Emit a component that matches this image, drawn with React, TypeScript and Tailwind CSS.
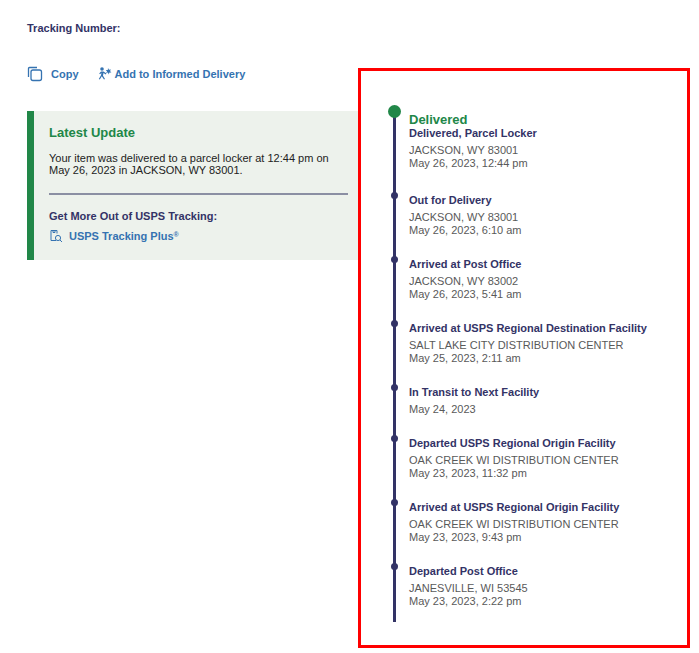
import React from "react";

const items = [
  { t: "Out for Delivery", l: ["JACKSON, WY 83001", "May 26, 2023, 6:10 am"] },
  { t: "Arrived at Post Office", l: ["JACKSON, WY 83002", "May 26, 2023, 5:41 am"] },
  { t: "Arrived at USPS Regional Destination Facility", l: ["SALT LAKE CITY DISTRIBUTION CENTER", "May 25, 2023, 2:11 am"] },
  { t: "In Transit to Next Facility", l: ["May 24, 2023"] },
  { t: "Departed USPS Regional Origin Facility", l: ["OAK CREEK WI DISTRIBUTION CENTER", "May 23, 2023, 11:32 pm"] },
  { t: "Arrived at USPS Regional Origin Facility", l: ["OAK CREEK WI DISTRIBUTION CENTER", "May 23, 2023, 9:43 pm"] },
  { t: "Departed Post Office", l: ["JANESVILLE, WI 53545", "May 23, 2023, 2:22 pm"] },
];

export default function App() {
  return (
    <div className="w-[699px] h-[653px] bg-white flex font-[Liberation_Sans] text-[11px]">
      <div className="w-[331px] ml-[27px] pt-[22px] flex flex-col">
        <div className="font-bold text-[#333366] leading-[13px]">Tracking Number:</div>
        <div className="flex items-center mt-[31px] text-[#3573b1] font-bold h-[16px]">
          <svg width="16" height="16" viewBox="0 0 16 16" fill="none" stroke="#3573b1" strokeWidth="1.3">
            <path d="M1.5 11V2.5a1 1 0 0 1 1-1H10" />
            <rect x="4" y="4" width="10.5" height="10.5" rx="2" />
          </svg>
          <span className="ml-[8px]">Copy</span>
          <svg className="ml-[18px]" width="16" height="16" viewBox="0 0 16 16" fill="#3573b1">
            <circle cx="5" cy="3" r="1.8" />
            <path d="M4 5.5h2.5l3 2-.7 1-2.3-1.4-.5 2.6 2 3.2-1 .6-2.2-3.2-2 3.2-1-.6 2.2-3.6.4-2.3-1.4 1.2-.8-.8z" />
            <path d="M11 2l1 1.8 2-.4-1 1.6 1.4 1.4-2 .1-.6 1.9-.9-1.8-2 .4 1.2-1.6-1.3-1.4 2 .1z" />
          </svg>
          <span className="ml-[2px]">Add to Informed Delivery</span>
        </div>
        <div className="mt-[29px] h-[149px] bg-[#edf2ec] border-l-[7px] border-[#218748] pl-[15px] pr-[10px] pt-[14px]">
          <div className="text-[13px] font-bold text-[#218748] leading-[15px]">Latest Update</div>
          <div className="mt-[12px] text-[#222] leading-[12px]">
            Your item was delivered to a parcel locker at 12:44 pm on May 26, 2023 in JACKSON, WY 83001.
          </div>
          <div className="mt-[17px] border-t-2 border-[#8b8fa3]" />
          <div className="mt-[15px] font-bold text-[#333366] leading-[13px]">Get More Out of USPS Tracking:</div>
          <div className="mt-[5px] flex items-center text-[#3573b1] font-bold">
            <svg width="14" height="14" viewBox="0 0 14 14" fill="none" stroke="#3573b1" strokeWidth="1">
              <path d="M2 1.5h6v3M2 1.5v10h5" />
              <path d="M4 1.5v2h2v-2" />
              <circle cx="9" cy="9" r="2.6" />
              <path d="M11 11l2 2" />
            </svg>
            <span className="ml-[6px]">USPS Tracking Plus<sup className="text-[7px]">®</sup></span>
          </div>
        </div>
      </div>
      <div className="w-[332px] h-[580px] mt-[68px] border-[3px] border-[#ff0000] pl-[30px] pt-[44px]">
        <div className="border-l-[3px] border-[#333366] ml-[2px] h-[510px] relative">
          <div className="absolute -left-[8px] -top-[7px] w-[13px] h-[13px] rounded-full bg-[#218748]" />
          <div className="pl-[13px] pb-[17px]">
            <div className="text-[13px] font-bold text-[#218748] leading-[15px] -mt-[3px]">Delivered</div>
            <div className="font-bold text-[#333366] leading-[13px]">Delivered, Parcel Locker</div>
            <div className="text-[#595959] leading-[13px] mt-[4px]">JACKSON, WY 83001</div>
            <div className="text-[#595959] leading-[13px]">May 26, 2023, 12:44 pm</div>
          </div>
          {items.map((it) => (
            <div key={it.t} className="relative pl-[13px] pb-[14px] pt-[7px]">
              <div className="absolute -left-[5px] top-[5px] w-[7px] h-[7px] rounded-full bg-[#333366]" />
              <div className="font-bold text-[#333366] leading-[13px]">{it.t}</div>
              <div className="mt-[4px]">
                {it.l.map((x) => (
                  <div key={x} className="text-[#595959] leading-[13px]">{x}</div>
                ))}
              </div>
            </div>
          ))}
        </div>
      </div>
    </div>
  );
}
